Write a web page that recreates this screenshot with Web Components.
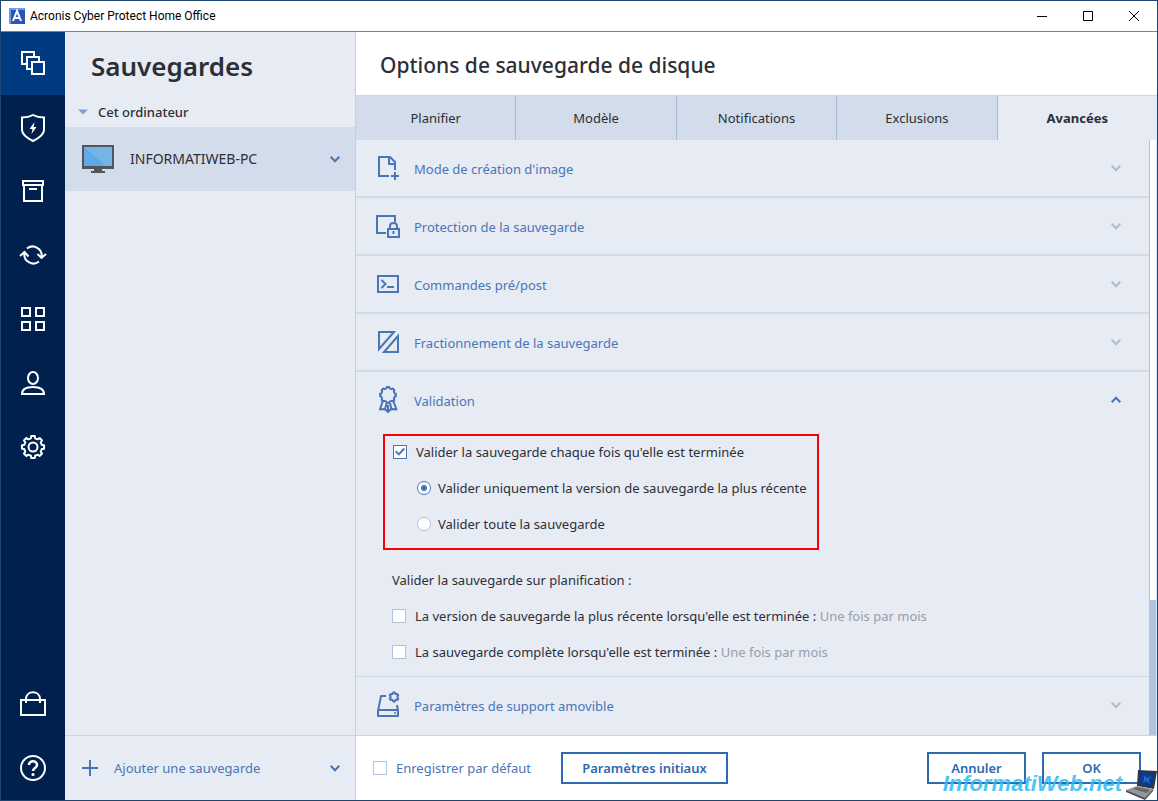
<!DOCTYPE html>
<html lang="fr">
<head>
<meta charset="utf-8">
<title>Acronis Cyber Protect Home Office</title>
<style>
  :root {
    --navy: #00204d;
    --navy-active: #003a80;
    --panel: #e7ebf4;
    --selected: #d2dcea;
    --line: #c8d6e6;
    --text: #2c2f36;
    --link: #4a76b5;
    --accent: #2f69b0;
    --muted: #989da8;
  }

  body {
    margin: 0;
    font-family: "Noto Sans", "Open Sans", sans-serif;
    font-size: 13px;
    line-height: 20px;
    color: var(--text);
  }
</style>
</head>
<body>
<app-window>
  <title-bar slot="title">Acronis Cyber Protect Home Office</title-bar>

  <side-nav slot="nav">
    <nav-item icon="copies" label="Sauvegardes" active></nav-item>
    <nav-item icon="shield" label="Protection"></nav-item>
    <nav-item icon="archive" label="Archives"></nav-item>
    <nav-item icon="sync" label="Synchronisation"></nav-item>
    <nav-item icon="grid" label="Outils"></nav-item>
    <nav-item icon="user" label="Compte"></nav-item>
    <nav-item icon="gear" label="Paramètres"></nav-item>
    <nav-item slot="bottom" icon="bag" label="Boutique"></nav-item>
    <nav-item slot="bottom" icon="help" label="Aide"></nav-item>
  </side-nav>

  <backup-list slot="list" heading="Sauvegardes" group="Cet ordinateur">
    <span slot="item">INFORMATIWEB-PC</span>
    <span slot="add">Ajouter une sauvegarde</span>
  </backup-list>

  <options-panel heading="Options de sauvegarde de disque">
    <tab-item slot="tab">Planifier</tab-item>
    <tab-item slot="tab">Modèle</tab-item>
    <tab-item slot="tab">Notifications</tab-item>
    <tab-item slot="tab">Exclusions</tab-item>
    <tab-item slot="tab" active>Avancées</tab-item>

    <option-section icon="filePlus" heading="Mode de création d'image"></option-section>
    <option-section icon="lock" heading="Protection de la sauvegarde"></option-section>
    <option-section icon="console" heading="Commandes pré/post"></option-section>
    <option-section icon="split" heading="Fractionnement de la sauvegarde"></option-section>
    <option-section icon="award" heading="Validation" open>
      <validation-form></validation-form>
    </option-section>
    <option-section icon="drive" heading="Paramètres de support amovible" last></option-section>

    <check-option slot="footer" class="link">Enregistrer par défaut</check-option>
    <action-button slot="footer" wide>Paramètres initiaux</action-button>
    <action-button slot="actions">Annuler</action-button>
    <action-button slot="actions">OK</action-button>
  </options-panel>

  <site-mark slot="mark">InformatiWeb.net</site-mark>
</app-window>

<script>
// Toothed outline used by the gear and the award icons
function cog(cx, cy, outer, inner, teeth) {
  const points = [];
  const step = (Math.PI * 2) / teeth;

  for (let i = 0; i < teeth; i++) {
    const a = i * step - Math.PI / 2;
    [[-0.30, inner], [-0.20, outer], [0.20, outer], [0.30, inner]].forEach(([k, r]) => {
      points.push(`${(cx + Math.cos(a + k * step) * r).toFixed(2)} ${(cy + Math.sin(a + k * step) * r).toFixed(2)}`);
    });
  }
  return `M${points.join("L")}Z`;
}

// All icons are stroked with currentColor on a 28px grid
const ICONS = {
  copies: `<path d="M7 15H3V3h12v4M12 20H8V8h12v4"/><path d="M13 13h12v12H13z"/>`,
  shield: `<path d="M3 4.500c4 0 8-.8 11-2.500 3 1.700 7 2.500 11 2.500V17c0 5-5 8-11 11-6-3-11-6-11-11z"/><path d="M15.500 9l-5 7h3l-1 5 5-7h-3z" fill="currentColor" stroke="none"/>`,
  archive: `<path d="M4 4h20v4H4zM5 8v16h18V8M10 12h8"/>`,
  sync: `<path d="M8 7.500a9 9 0 0 1 14.500 8.500M20 20.500a9 9 0 0 1-14.500-8.500M1 15l4.500-4 4 4.500M18.500 13l4 4 4.500-4"/>`,
  grid: `<path d="M3 3h8v8H3zM17 3h8v8h-8zM3 17h8v8H3zM17 17h8v8h-8z"/>`,
  user: `<ellipse cx="14" cy="9" rx="5" ry="6"/><path d="M3 25c0-5 4-7 11-7s11 2 11 7z"/>`,
  gear: `<path stroke-linejoin="round" d="${cog(14, 14, 11.2, 9, 8)}"/><circle cx="14" cy="14" r="4.500"/>`,
  bag: `<path d="M2 10h24v15H2zM7 13V9c0-9 14-9 14 0v4"/>`,
  help: `<circle cx="14" cy="14" r="12"/><path stroke-width="2.500" d="M10 11c0-5 8-5 8 0 0 3-4 3-4 6"/><circle cx="14" cy="20.500" r="1.600" fill="currentColor" stroke="none"/>`,
  filePlus: `<path d="M15 22H5V3h11l5 5v8M15 3v7h6M21 18v8M17 22h8"/>`,
  lock: `<path d="M12 21H3V4h18v6M16 18v-4c0-4 7-4 7 0v4"/><path d="M14 17h11v8H14zM19.500 19v3"/>`,
  console: `<path d="M4 6h20v16H4zM7.500 10l4 4-4 4M13 17h7"/>`,
  split: `<path d="M5 4h15L5 21zM24 8v16H10z"/>`,
  award: `<path stroke-linejoin="round" d="${cog(14, 9, 8, 6.800, 8)}"/><path stroke-linejoin="round" d="M9 14l-3 9.500 4-.5 1 .5 1.500-6M14 19v7l3-3M16 17l1.500 6.500 1-.5 4 .5-3.500-9.500M11 23l3 3"/>`,
  drive: `<path stroke-linejoin="round" d="M12 5H7L4 20v5h20v-5l-1-6M4 19h20"/><path stroke-linejoin="round" d="${cog(20, 6, 4.500, 3.600, 6)}"/><circle cx="21" cy="22" r="1" fill="currentColor" stroke="none"/>`,
  plus: `<path d="M14 0v28M0 14h28" stroke-width="3.500"/>`,
  chevron: `<path d="M4 9l10 10L24 9" stroke-width="5"/>`,
  triangle: `<path d="M0 7h28L14 21z" fill="currentColor" stroke="none"/>`
};

// Attach an open shadow root with the styles and the markup of the element
function render(host, css, html) {
  host.attachShadow({ mode: "open" }).innerHTML = `
    <style>
      *, ::before, ::after { box-sizing: border-box; }
      button { font: inherit; color: inherit; border: 0; margin: 0; padding: 0; background: none; cursor: pointer; }
      ${css}
    </style>
    ${html}
  `;
}

class LineIcon extends HTMLElement {
  constructor() {
    super();
    const size = this.getAttribute("size") || "28";

    render(this, `
      :host { display: block; flex: none; width: ${size}px; height: ${size}px; }
      svg { display: block; width: 100%; height: 100%; overflow: visible; }
    `, `
      <svg viewBox="0 0 28 28" fill="none" stroke="currentColor" stroke-width="2" aria-hidden="true">
        ${ICONS[this.getAttribute("name")]}
      </svg>
    `);
  }
}

class AppWindow extends HTMLElement {
  constructor() {
    super();
    render(this, `
      :host {
        position: relative;
        box-sizing: border-box;
        display: flex;
        flex-direction: column;
        min-height: 100vh;
        border: 1px solid #1d4670;
        background: #fff;
      }
      .body {
        flex: 1;
        display: grid;
        grid-template-columns: 64px 291px minmax(0, 1fr);
      }
    `, `
      <slot name="title"></slot>
      <div class="body">
        <slot name="nav"></slot>
        <slot name="list"></slot>
        <slot></slot>
      </div>
      <slot name="mark"></slot>
    `);
  }
}

class TitleBar extends HTMLElement {
  constructor() {
    super();
    render(this, `
      :host {
        position: relative;
        z-index: 1;
        display: flex;
        align-items: center;
        height: 30px;
        padding-left: 8px;
        background: #fff;
        box-shadow: 0 1px #7d8085;
        color: #000;
        font-family: Roboto, "Open Sans", sans-serif;
        font-size: 12px;
      }
      .logo { width: 16px; height: 16px; margin-right: 5px; }
      .name { flex: 1; }
      button { width: 46px; height: 30px; display: grid; place-items: center; }
      svg { display: block; }
    `, `
      <svg class="logo" viewBox="0 0 16 16" aria-hidden="true">
        <path fill="#2856b4" d="M0 0h16v16H0z"/>
        <path fill="#6d9be4" d="M0 0h16v2H2v14H0z"/>
        <path fill="none" stroke="#fff" stroke-width="2" d="M4 13L8 3l4 10M5 10h6"/>
      </svg>
      <span class="name"><slot></slot></span>
      <button aria-label="Réduire"><svg width="10" height="10" stroke="#000"><path d="M0 5.500h10"/></svg></button>
      <button aria-label="Agrandir"><svg width="10" height="10" stroke="#000" fill="none"><path d="M.5.5h9v9h-9z"/></svg></button>
      <button aria-label="Fermer"><svg width="10" height="10" stroke="#000"><path d="M0 0l10 10M10 0L0 10"/></svg></button>
    `);
  }
}

class SideNav extends HTMLElement {
  constructor() {
    super();
    render(this, `
      :host { display: block; background: var(--navy); color: #fff; }
      nav { display: flex; flex-direction: column; height: 100%; }
      .space { flex: 1; }
    `, `
      <nav>
        <slot></slot>
        <div class="space"></div>
        <slot name="bottom"></slot>
      </nav>
    `);
  }
}

class NavItem extends HTMLElement {
  constructor() {
    super();
    render(this, `
      :host { display: block; }
      :host([active]) { background: var(--navy-active); }
      button { display: grid; place-items: center; width: 100%; height: 64px; }
    `, `
      <button aria-label="${this.getAttribute("label")}">
        <line-icon name="${this.getAttribute("icon")}"></line-icon>
      </button>
    `);
  }
}

class BackupList extends HTMLElement {
  constructor() {
    super();
    render(this, `
      :host {
        display: flex;
        flex-direction: column;
        background: var(--panel);
        border-right: 1px solid #c5cfdf;
      }
      h1 {
        margin: 0;
        padding: 19px 26px 14px;
        font-size: 26px;
        line-height: 32px;
        font-weight: 600;
      }
      button { display: flex; align-items: center; width: 100%; text-align: left; }
      .group { height: 31px; padding-left: 13px; gap: 10px; font-weight: 500; }
      .group line-icon { color: #7f9fcc; }
      .item { height: 64px; padding: 0 14px 0 17px; gap: 16px; background: var(--selected); font-size: 14px; }
      .add { height: 65px; padding: 0 14px 0 17px; gap: 16px; border-top: 1px solid var(--line); color: var(--link); }
      .label { flex: 1; }
      .item .chevron, .add line-icon { color: var(--link); }
      .space { flex: 1; }
    `, `
      <h1>${this.getAttribute("heading")}</h1>
      <button class="group">
        <line-icon name="triangle" size="10"></line-icon>
        <span>${this.getAttribute("group")}</span>
      </button>
      <button class="item">
        <svg width="32" height="28" viewBox="0 0 32 28" aria-hidden="true">
          <path fill="#555459" d="M0 0h32v24H0z"/>
          <path fill="#5fa9e4" d="M2 2h28v19H2z"/>
          <path fill="#74b5e8" d="M2 2h28v19h-6z"/>
          <path fill="#555459" d="M12 24h8v2h3v2H9v-2h3z"/>
        </svg>
        <span class="label"><slot name="item"></slot></span>
        <line-icon class="chevron" name="chevron" size="12"></line-icon>
      </button>
      <div class="space"></div>
      <button class="add">
        <line-icon name="plus" size="16"></line-icon>
        <span class="label"><slot name="add"></slot></span>
        <line-icon name="chevron" size="12"></line-icon>
      </button>
    `);
  }
}

class OptionsPanel extends HTMLElement {
  constructor() {
    super();
    render(this, `
      :host { display: flex; flex-direction: column; min-width: 0; }
      h2 {
        margin: 0;
        padding: 18px 24px 14px;
        font-size: 21px;
        line-height: 32px;
        font-weight: 500;
      }
      .tabs { display: flex; height: 45px; border-top: 1px solid var(--line); background: var(--selected); }
      .content { flex: 1; display: flex; background: var(--panel); }
      .sections { flex: 1; }
      .track {
        display: flex;
        flex-direction: column;
        justify-content: flex-end;
        width: 8px;
        border-left: 1px solid #b3c2de;
        border-right: 1px solid #dfe6f0;
        background: #fff;
      }
      .thumb { height: 135px; background: #b0c3df; }
      footer {
        display: flex;
        align-items: center;
        gap: 16px;
        height: 65px;
        padding: 0 16px 0 17px;
        border-top: 1px solid var(--line);
      }
      .left { flex: 1; display: flex; align-items: center; gap: 30px; }
    `, `
      <h2>${this.getAttribute("heading")}</h2>
      <div class="tabs" role="tablist"><slot name="tab"></slot></div>
      <div class="content">
        <div class="sections"><slot></slot></div>
        <div class="track"><div class="thumb"></div></div>
      </div>
      <footer>
        <div class="left"><slot name="footer"></slot></div>
        <slot name="actions"></slot>
      </footer>
    `);
  }
}

class TabItem extends HTMLElement {
  constructor() {
    super();
    const active = this.hasAttribute("active");

    render(this, `
      :host { flex: 1 1 0; display: block; border-right: 1px solid #a9bad3; }
      :host([active]) { background: var(--panel); border: 0; font-weight: 700; }
      button { width: 100%; height: 100%; }
    `, `<button role="tab" aria-selected="${active}"><slot></slot></button>`);
  }
}

class OptionSection extends HTMLElement {
  constructor() {
    super();
    const open = this.hasAttribute("open");

    render(this, `
      :host { display: block; border-bottom: 2px solid #d2dae8; }
      :host([open]) { border-bottom-width: 1px; }
      :host([last]) { border-color: transparent; }
      button {
        display: flex;
        align-items: center;
        gap: 12px;
        width: 100%;
        height: 56px;
        padding: 0 27px 0 18px;
        text-align: left;
        color: var(--link);
      }
      .label { flex: 1; padding-top: 1px; }
      .chevron { color: #b4bcca; }
      :host([open]) .chevron { color: var(--link); transform: rotate(180deg); }
    `, `
      <button aria-expanded="${open}">
        <line-icon name="${this.getAttribute("icon")}"></line-icon>
        <span class="label">${this.getAttribute("heading")}</span>
        <line-icon class="chevron" name="chevron" size="12"></line-icon>
      </button>
      <slot></slot>
    `);
  }
}

class ValidationForm extends HTMLElement {
  constructor() {
    super();
    render(this, `
      :host { display: block; padding: 6px 27px 14px; }
      .frame {
        display: flex;
        flex-direction: column;
        gap: 16px;
        width: 436px;
        max-width: 100%;
        padding: 6px 8px 14px;
        border: 2px solid #f80008;
        white-space: nowrap;
      }
      .nested { display: flex; flex-direction: column; gap: 16px; padding-left: 24px; }
      .schedule { display: flex; flex-direction: column; gap: 16px; padding: 20px 9px 0; }
      p { margin: 0; }
      .often { color: var(--muted); }
    `, `
      <div class="frame">
        <check-option checked>Valider la sauvegarde chaque fois qu'elle est terminée</check-option>
        <div class="nested">
          <check-option type="radio" checked>Valider uniquement la version de sauvegarde la plus récente</check-option>
          <check-option type="radio">Valider toute la sauvegarde</check-option>
        </div>
      </div>
      <div class="schedule">
        <p>Valider la sauvegarde sur planification :</p>
        <check-option>La version de sauvegarde la plus récente lorsqu'elle est terminée : <span class="often">Une fois par mois</span></check-option>
        <check-option>La sauvegarde complète lorsqu'elle est terminée : <span class="often">Une fois par mois</span></check-option>
      </div>
    `);
  }
}

class CheckOption extends HTMLElement {
  constructor() {
    super();
    const type = this.getAttribute("type") || "checkbox";
    const checked = this.hasAttribute("checked") ? "checked" : "";

    render(this, `
      :host { display: block; }
      :host(.link) { color: var(--link); }
      label { display: flex; align-items: center; gap: 9px; }
      input {
        appearance: none;
        display: grid;
        place-items: center;
        flex: none;
        width: 14px;
        height: 14px;
        margin: 0;
        border: 1px solid #b3c3dc;
        background: #fff;
      }
      input:checked { border-color: var(--link); }
      input:checked::before { content: ""; background: var(--link); }
      input[type="checkbox"]:checked::before {
        width: 10px;
        height: 10px;
        clip-path: polygon(0 50%, 14% 36%, 38% 60%, 86% 8%, 100% 22%, 38% 88%);
      }
      input[type="radio"] { border-radius: 50%; }
      input[type="radio"]:checked::before { width: 6px; height: 6px; border-radius: 50%; }
      input[type="radio"] + span { margin-left: -2px; }
    `, `
      <label><input type="${type}" ${checked}><span><slot></slot></span></label>
    `);
  }
}

class ActionButton extends HTMLElement {
  constructor() {
    super();
    render(this, `
      :host { display: block; }
      button {
        min-width: 99px;
        height: 32px;
        border: 2px solid var(--accent);
        background: #fff;
        color: var(--accent);
        font-weight: 600;
      }
      :host([wide]) button { min-width: 167px; }
    `, `<button><slot></slot></button>`);
  }
}

class SiteMark extends HTMLElement {
  constructor() {
    super();
    render(this, `
      :host {
        position: absolute;
        right: 0;
        bottom: 0;
        display: flex;
        align-items: flex-end;
        gap: 4px;
        pointer-events: none;
      }
      span {
        font: italic 700 22px/32px "Liberation Sans", sans-serif;
        color: #2cbcf2;
        opacity: .85;
      }
      svg { display: block; }
    `, `
      <span><slot></slot></span>
      <svg width="31" height="30" viewBox="0 0 31 30" aria-hidden="true">
        <path fill="#33363c" d="M12 0l19 1-3 18-17-3z"/>
        <path fill="#0c3a8c" d="M14 2l15 1-3 14-13-2z"/>
        <path fill="#1f6ad0" d="M18 5l3 3 4-2-2 4 1 4-4-3-3 2 1-4z"/>
        <path fill="#96989b" d="M11 16l16 3-8 10L0 20z"/>
        <path fill="#66686c" d="M11 17l13 3-3 3-14-4z"/>
        <path fill="#4c4e52" d="M0 20l19 8 8-9v2l-8 9L0 22z"/>
      </svg>
    `);
  }
}

customElements.define("line-icon", LineIcon);
customElements.define("app-window", AppWindow);
customElements.define("title-bar", TitleBar);
customElements.define("side-nav", SideNav);
customElements.define("nav-item", NavItem);
customElements.define("backup-list", BackupList);
customElements.define("options-panel", OptionsPanel);
customElements.define("tab-item", TabItem);
customElements.define("option-section", OptionSection);
customElements.define("validation-form", ValidationForm);
customElements.define("check-option", CheckOption);
customElements.define("action-button", ActionButton);
customElements.define("site-mark", SiteMark);
</script>
</body>
</html>
